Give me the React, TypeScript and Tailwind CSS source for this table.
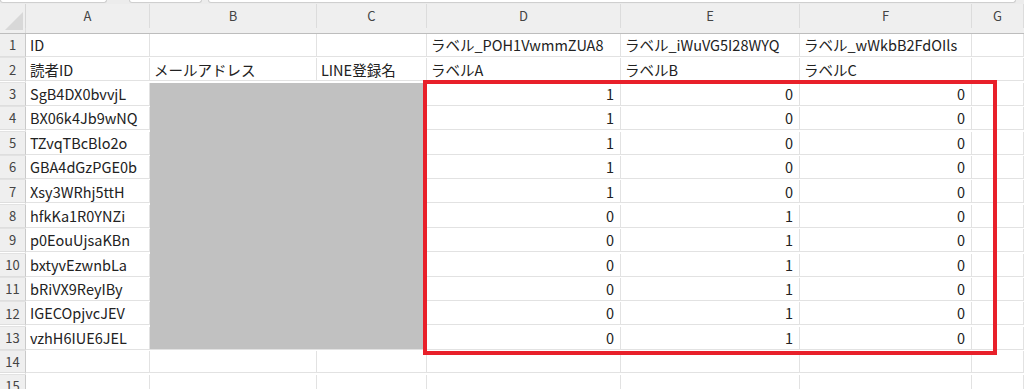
import React from "react";

const GRID = "grid grid-cols-[26px_124px_167px_110px_194px_179px_172px_1fr]";
const FONT = { fontFamily: '"Noto Sans CJK JP", "Noto Sans", sans-serif' };

type Row = { a: string; b?: string; c?: string; d?: string; e?: string; f?: string; num?: boolean };

const ids = [
  "SgB4DX0bvvjL",
  "BX06k4Jb9wNQ",
  "TZvqTBcBlo2o",
  "GBA4dGzPGE0b",
  "Xsy3WRhj5ttH",
  "hfkKa1R0YNZi",
  "p0EouUjsaKBn",
  "bxtyvEzwnbLa",
  "bRiVX9ReyIBy",
  "IGECOpjvcJEV",
  "vzhH6IUE6JEL",
];
const colD = [1, 1, 1, 1, 1, 0, 0, 0, 0, 0, 0];
const colE = [0, 0, 0, 0, 0, 1, 1, 1, 1, 1, 1];

const rows: Row[] = [
  { a: "ID", d: "ラベル_POH1VwmmZUA8", e: "ラベル_iWuVG5I28WYQ", f: "ラベル_wWkbB2FdOIls" },
  { a: "読者ID", b: "メールアドレス", c: "LINE登録名", d: "ラベルA", e: "ラベルB", f: "ラベルC" },
  ...ids.map((id, i) => ({ a: id, d: String(colD[i]), e: String(colE[i]), f: "0", num: true })),
  { a: "" },
  { a: "" },
];

function Cell({ children, right }: { children?: React.ReactNode; right?: boolean }) {
  return (
    <div
      className={`flex items-center overflow-hidden whitespace-nowrap border-r border-b border-[#e2e2e2] text-[14.5px] text-[#222] ${
        right ? "justify-end pr-[6px]" : "pl-[4px]"
      }`}
    >
      {children}
    </div>
  );
}

export default function App() {
  return (
    <div className="relative h-[389px] w-[1024px] overflow-hidden bg-white" style={FONT}>
      {/* toolbar edge with the bottoms of the boxes above the grid */}
      <div className="flex h-[4px] bg-[#ececec]">
        <div className="h-[3px] w-[107px] rounded-b-[4px] border border-t-0 border-[#cfcfcf] bg-white" />
        <div className="ml-[22px] h-[3px] w-[73px] rounded-b-[4px] border border-t-0 border-[#cfcfcf] bg-white" />
        <div className="ml-[6px] mr-[8px] h-[3px] flex-1 rounded-b-[4px] border border-t-0 border-[#cfcfcf] bg-white" />
      </div>

      {/* column headers */}
      <div className={`${GRID} h-[30px] border-b border-[#bdbdbd] bg-[#efefef] text-[13px] text-[#444]`}>
        <div className="relative border-r border-[#d6d6d6]">
          <svg className="absolute left-[5px] top-[8px]" width="18" height="18" viewBox="0 0 18 18">
            <polygon points="18,0 18,18 0,18" fill="#d8d8d8" />
          </svg>
        </div>
        {["A", "B", "C", "D", "E", "F", "G", ""].map((l, i) => (
          <div key={i} className="flex items-center justify-center border-r border-[#dcdcdc]">
            {l}
          </div>
        ))}
      </div>

      {/* sheet body */}
      {rows.map((r, i) => (
        <div key={i} className={`${GRID} h-[24.4px]`}>
          <div className="flex items-center justify-center border-r border-b border-r-[#c9c9c9] border-b-[#dedede] bg-[#efefef] text-[13px] text-[#444]">
            {i + 1}
          </div>
          <Cell>{r.a}</Cell>
          <Cell>{r.b}</Cell>
          <Cell>{r.c}</Cell>
          <Cell right={r.num}>{r.d}</Cell>
          <Cell right={r.num}>{r.e}</Cell>
          <Cell right={r.num}>{r.f}</Cell>
          <Cell />
          <Cell />
        </div>
      ))}

      {/* redaction block over the address and LINE name columns */}
      <div className="absolute left-[150px] top-[83px] h-[266px] w-[273px] bg-[#c1c1c1]" />

      {/* highlight frame around the label values */}
      <div className="absolute left-[423px] top-[80px] h-[275px] w-[574px] border-4 border-[#e8202a]" />
    </div>
  );
}
